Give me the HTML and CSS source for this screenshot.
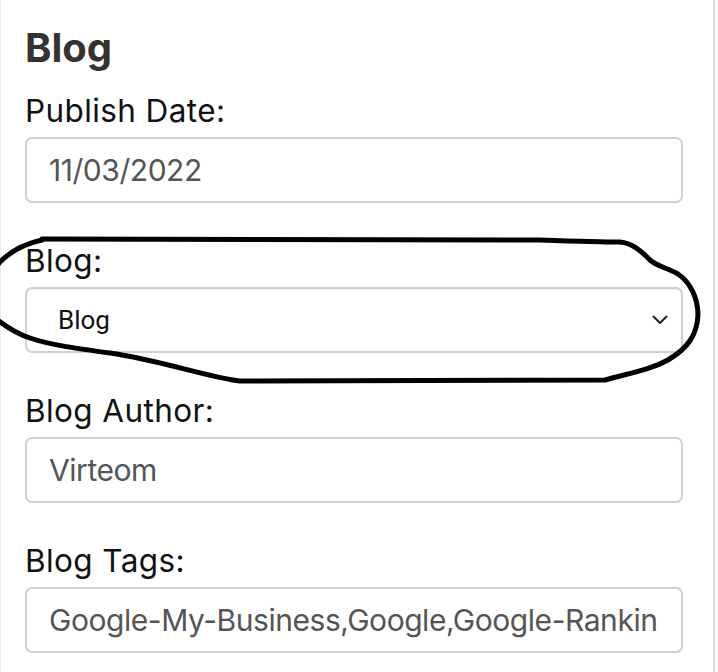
FILE: index.html
```html
<!DOCTYPE html>
<html lang="en">
<head>
<meta charset="utf-8">
<title>Blog</title>
<link rel="stylesheet" href="styles.css">
</head>
<body>
<div class="page">
  <h2 class="title">Blog</h2>
  <div class="field">
    <label class="label" for="date">Publish Date:</label>
    <input class="control" id="date" type="text" value="11/03/2022">
  </div>
  <div class="field">
    <label class="label" for="blog">Blog:</label>
    <div class="select-wrap">
      <select class="control select" id="blog"><option>Blog</option></select>
      <svg class="chevron" width="16" height="10" viewBox="0 0 16 10"><path d="M1.5 1.5 L8 8 L14.5 1.5" fill="none" stroke="#222" stroke-width="2" stroke-linecap="round" stroke-linejoin="round"/></svg>
    </div>
  </div>
  <div class="field">
    <label class="label" for="author">Blog Author:</label>
    <input class="control" id="author" type="text" value="Virteom">
  </div>
  <div class="field">
    <label class="label" for="tags">Blog Tags:</label>
    <input class="control" id="tags" type="text" value="Google-My-Business,Google,Google-Ranking">
  </div>
</div>
<svg class="annotation" width="718" height="672" viewBox="0 0 718 672">
  <path d="M 42 239 L 540 240 C 570 241, 600 242, 620 242 C 632 243, 640 250, 650 260 C 658 267, 668 268, 678 274 C 690 282, 698 298, 698 315 C 697 335, 688 348, 668 360 C 650 370, 630 373, 605 380 L 240 381 C 210 378, 160 360, 110 353 C 80 349, 50 345, 30 338 C 15 333, 5 326, -5 318" fill="none" stroke="#000" stroke-width="5" stroke-linecap="round" stroke-linejoin="round"/>
  <path d="M 42 240 C 28 243, 12 250, 0 262 L -5 268" fill="none" stroke="#000" stroke-width="5" stroke-linecap="round"/>
</svg>
</body>
</html>
```
FILE: styles.css
```css
html, body {
  margin: 0;
  padding: 0;
  background: #fff;
}
body {
  position: relative;
  width: 718px;
  height: 672px;
  overflow: hidden;
  font-family: Inter, "Liberation Sans", sans-serif;
}
.page {
  box-sizing: border-box;
  width: 715px;
  height: 672px;
  padding: 24px 0 0 24px;
  border-left: 1px solid #eeeeee;
  border-right: 2px solid #dddddd;
  box-shadow: 1px 0 2px rgba(0, 0, 0, 0.06);
}
.title {
  margin: 0;
  font-weight: 700;
  font-size: 40px;
  line-height: 48px;
  color: #333;
}
.field {
  display: flex;
  flex-direction: column;
  margin-top: 38px;
}
.title + .field {
  margin-top: 19px;
}
.label {
  display: block;
  font-size: 31.5px;
  line-height: 40px;
  letter-spacing: 0.4px;
  color: #111;
  margin-bottom: 6px;
}
.control {
  box-sizing: border-box;
  width: 658px;
  height: 66px;
  margin: 0;
  padding: 0 24px 0 22px;
  border: 2px solid #d0d0d0;
  border-radius: 7px;
  background: #fff;
  font-family: Inter, "Liberation Sans", sans-serif;
  font-size: 30px;
  letter-spacing: -0.45px;
  color: #555;
  outline: none;
}
.select-wrap {
  position: relative;
  width: 658px;
}
.select {
  appearance: none;
  -webkit-appearance: none;
  padding-left: 31px;
  font-family: Roboto, "Liberation Sans", sans-serif;
  font-size: 26px;
  letter-spacing: 0;
  color: #111;
  box-shadow: inset 0 1px 2px rgba(0, 0, 0, 0.06);
}
.chevron {
  position: absolute;
  right: 15px;
  top: 28px;
}
.annotation {
  position: absolute;
  left: 0;
  top: 0;
  pointer-events: none;
}
```
